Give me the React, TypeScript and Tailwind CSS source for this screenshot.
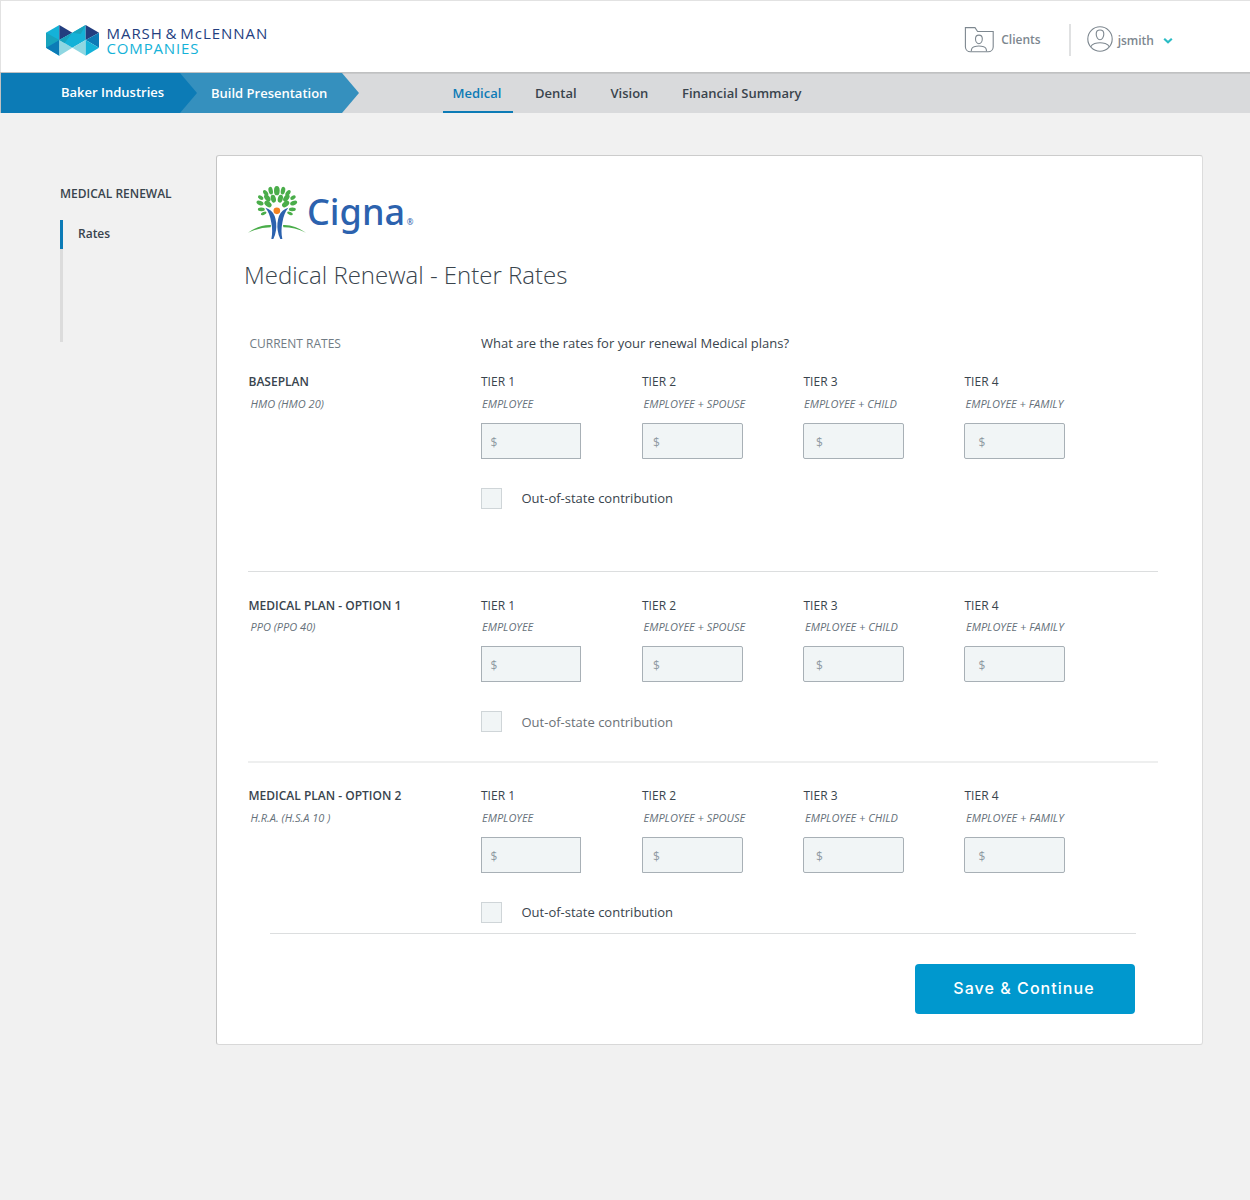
import React from "react";

function CompanyMark() {
  return (
    <svg width="53" height="31" viewBox="48 45 159 93" aria-hidden="true">
      <polygon points="48,68 88,45 88,137 48,113" fill="#14b2d8" />
      <polygon points="48,68 88,90 48,113" fill="#18a3bd" />
      <polygon points="48,113 88,90 88,137" fill="#0c7bb6" />
      <polygon points="88,45 127,68 88,90" fill="#233e7f" />
      <polygon points="88,90 127,113 88,137" fill="#8fd7e2" />
      <polygon points="127,68 167,45 167,90 127,113 88,90" fill="#14b2d8" />
      <polygon points="88,90 127,68 104,99" fill="#18a3bd" />
      <polygon points="127,68 167,45 152,72" fill="#18a3bd" />
      <polygon points="127,113 167,90 167,137" fill="#8fd7e2" />
      <polygon points="167,45 207,68 167,90" fill="#233e7f" />
      <polygon points="167,90 207,68 207,113" fill="#0c7bb6" />
      <polygon points="167,90 207,113 167,137" fill="#14b2d8" />
    </svg>
  );
}

const leaves: [number, number, number, number, number][] = [
  [80, 26, 6.5, 11.5, -12],
  [65, 33, 6, 10, -38],
  [88, 50, 7.5, 12, -14],
  [70, 48, 7.5, 12, -38],
  [50, 47, 5.5, 9, -58],
  [48, 63, 6.5, 11, -66],
  [72, 66, 8, 12, -52],
  [52, 82, 5.5, 10.5, -88],
  [59, 94, 4.5, 9, -112],
];

function CignaLogo() {
  return (
    <svg width="168" height="57" viewBox="12 6 504 171" role="img" aria-label="Cigna">
      <g fill="#4aad4a">
        <ellipse cx="98.5" cy="26" rx="8.5" ry="14" />
        {leaves.map(([x, y, rx, ry, a], i) => (
          <React.Fragment key={i}>
            <ellipse cx={x} cy={y} rx={rx} ry={ry} transform={`rotate(${a} ${x} ${y})`} />
            <ellipse cx={197 - x} cy={y} rx={rx} ry={ry} transform={`rotate(${-a} ${197 - x} ${y})`} />
          </React.Fragment>
        ))}
        <path d="M12 152 Q48 127 81 129 L80 136 Q46 136 12 152Z" />
        <path d="M186 152 Q150 127 117 129 L118 136 Q152 136 186 152Z" />
      </g>
      <g fill="#2c62ae">
        <path d="M64 77 Q84 82 92 102 Q99 122 96 145 Q94 160 88 171 L82 171 Q87 148 82 122 Q78 94 64 77Z" />
        <path d="M133 77 Q113 82 105 102 Q98 122 101 145 Q103 160 109 171 L115 171 Q110 148 115 122 Q119 94 133 77Z" />
        <text x="189" y="129" fontSize="108" fontWeight="540" fontFamily="'Noto Sans', sans-serif">
          Cigna
        </text>
        <text x="488" y="130" fontSize="24" fontFamily="'Noto Sans', sans-serif">
          ®
        </text>
      </g>
      <circle cx="98.5" cy="86.5" r="10" fill="#f58220" />
    </svg>
  );
}

function ClientsIcon() {
  return (
    <svg width="30" height="27" viewBox="-.6 -.4 30 27" fill="none" stroke="#7d878f" strokeWidth="1.1">
      <path d="M.8 1.2H10.4l2.6 3.9h15.6v15.4a5 5 0 0 1-5 4.8H5.8a5 5 0 0 1-5-4.8Z" />
      <path d="M14.3 8.700c2.300 0 3.400 1.500 3.400 3.700 0 2.600-1.500 4.900-3.400 4.900s-3.400-2.300-3.400-4.900c0-2.200 1.100-3.700 3.400-3.700Z" />
      <path d="M6.7 24.800c0-2.600.9-4 2.800-4.500 3-.8 6.600-.8 9.600 0 1.900.5 2.800 1.900 2.800 4.500" />
    </svg>
  );
}

function UserIcon() {
  return (
    <svg width="26" height="26" viewBox="0 0 26 26" fill="none" stroke="#7d878f" strokeWidth="1.1">
      <circle cx="13" cy="13" r="12.2" />
      <path d="M13 4c2.500 0 3.800 1.600 3.800 3.900 0 3-1.700 5.800-3.800 5.800s-3.800-2.800-3.800-5.800C9.200 5.600 10.500 4 13 4Z" />
      <path d="M3.700 20.900c.7-1.900 2-2.800 4-3.400 3.500-1 7.100-1 10.600 0 2 .6 3.300 1.500 4 3.400" />
    </svg>
  );
}

const tiers = [
  { name: "TIER 1", who: "EMPLOYEE", label: "", input: "w-[100px] pl-[8.5px]" },
  { name: "TIER 2", who: "EMPLOYEE + SPOUSE", label: "", input: "w-[101px] pl-[10px] rounded-r-[2px]" },
  { name: "TIER 3", who: "EMPLOYEE + CHILD", label: "pl-[0.5px]", input: "w-[101px] pl-[12px] rounded-[2px]" },
  { name: "TIER 4", who: "EMPLOYEE + FAMILY", label: "pl-[0.5px]", input: "w-[101px] pl-[13.5px] rounded-[2px]" },
];

type PlanProps = {
  name: string;
  detail: string;
  className: string;
  gap: string;
  shifts: string[];
  labelColor?: string;
};

function Plan({ name, detail, className, gap, shifts, labelColor = "leading-[21px] text-[#39444d]" }: PlanProps) {
  return (
    <section className={className}>
      <div className="grid grid-cols-[233px_repeat(4,161px)]">
        <div className={`flex flex-col pl-[0.5px] ${gap}`}>
          <h2 className="h-5 text-xs leading-[22px] font-semibold">{name}</h2>
          <p className="h-5 pl-[2px] text-[11px] leading-5 text-[#66717a] italic">{detail}</p>
        </div>
        {tiers.map((t, i) => (
          <div key={t.name}>
            <div className={`flex flex-col whitespace-nowrap ${gap}`}>
              <h3 className={`h-5 text-xs leading-[22px] ${t.label}`}>{t.name}</h3>
              <p className={`h-5 text-[11px] leading-5 text-[#66717a] italic ${shifts[i]}`}>{t.who}</p>
            </div>
            <div
              className={`mt-[9px] h-9 border border-[#a8b0b6] bg-[#f1f5f6] text-xs leading-[37px] text-[#8f9aa2] ${t.input}`}
            >
              $
            </div>
          </div>
        ))}
      </div>
      <label className={`mt-[29px] ml-[233px] flex h-[21px] text-[13px] ${labelColor}`}>
        <span className="mr-[19.5px] size-[21px] border border-[#cfd5d8] bg-[#f1f5f6]" />
        Out-of-state contribution
      </label>
    </section>
  );
}

export default function App() {
  return (
    <div className="min-h-[1200px] w-[1250px] bg-[#f1f1f1] font-['Open_Sans',sans-serif] text-[#39444d]">
      <header className="flex h-[72px] border-t border-l border-[#e2e2e2] bg-white">
        <div className="flex pt-6 pl-[45px]">
          <CompanyMark />
          <div className="ml-[7.5px] pt-px text-[15px] leading-[15px] whitespace-nowrap">
            <div className="tracking-[0.95px] text-[#233e7f] [word-spacing:-2px]">MARSH &amp; McLENNAN</div>
            <div className="tracking-[0.85px] text-[#14b2d8]">COMPANIES</div>
          </div>
        </div>
        <div className="mr-[77px] ml-auto flex text-xs leading-5 font-semibold text-[#7d878f]">
          <div className="mt-[25px]">
            <ClientsIcon />
          </div>
          <span className="mt-[29px] ml-[7px]">Clients</span>
          <div className="mt-[23px] ml-7 h-8 w-[2px] bg-[#e0e1e2]" />
          <div className="mt-[25px] ml-4">
            <UserIcon />
          </div>
          <span className="mt-[30px] ml-[5px]">jsmith</span>
          <svg className="mt-[36px] ml-[9px]" width="10" height="7" viewBox="0 0 10 7" fill="none">
            <path d="M1.200 1.800 5 5.200 8.800 1.800" stroke="#2abcc5" strokeWidth="2.2" />
          </svg>
        </div>
      </header>

      <nav className="flex h-[41px] border-t border-l border-[#c0c1c2] bg-[#d9dadc] text-[13px] font-semibold shadow-[inset_0_1px_0_#c8c9ca]">
        <div className="flex w-[442px] text-white">
          <div className="flex bg-[#3590be] [clip-path:polygon(0_0,341px_0,358px_50%,341px_100%,0_100%)]">
            <div className="w-[196px] bg-[#0c7bb6] pl-[60px] leading-[39px] [clip-path:polygon(0_0,179px_0,100%_50%,179px_100%,0_100%)]">
              Baker Industries
            </div>
            <div className="w-[162px] pl-[14px] leading-[41px] whitespace-nowrap">Build Presentation</div>
          </div>
        </div>
        <div className="h-10 w-[70px] border-b-2 border-[#0c7bb6] pl-[9.5px] leading-[41px] text-[#0c7bb6]">Medical</div>
        <div className="w-[76px] pl-[22px] leading-[41px]">Dental</div>
        <div className="w-[92px] pl-[21.5px] leading-[41px]">Vision</div>
        <div className="pl-px leading-[41px]">Financial Summary</div>
      </nav>

      <div className="flex">
        <aside className="w-[216px] pt-[71px] pl-[60px]">
          <h2 className="text-xs leading-5 font-semibold">MEDICAL RENEWAL</h2>
          <ul className="mt-[16px] h-[122px] w-[100px] text-xs leading-[27px] font-semibold shadow-[inset_3px_0_0_#dcdcdc]">
            <li className="h-[29px] border-l-[3px] border-[#0c7bb6] pl-[15px]">Rates</li>
          </ul>
        </aside>

        <main className="mt-[42px] h-[890px] w-[987px] rounded-[3px] border border-t-[#cccccc] border-r-[#dcdcdc] border-b-[#d8d8d8] border-l-[#c4c4c4] bg-white pt-7 pl-[31px]">
          <CignaLogo />
          <h1 className="-ml-1 mt-[18px] h-8 text-2xl leading-8 font-light">Medical Renewal - Enter Rates</h1>
          <div className="mt-[42px] flex h-5">
            <span className="w-[233px] pl-[1.5px] text-xs leading-[21px] text-[#717c84]">CURRENT RATES</span>
            <span className="text-[13px] leading-5">What are the rates for your renewal Medical plans?</span>
          </div>

          <Plan
            name="BASEPLAN"
            detail="HMO (HMO 20)"
            gap="gap-[3px]"
            shifts={["pl-px", "pl-[1.5px]", "pl-px", "pl-[1.5px]"]}
            className="h-[219px] w-[910px] border-b border-[#dcdedf] pt-[18px]"
          />
          <Plan
            name="MEDICAL PLAN - OPTION 1"
            detail="PPO (PPO 40)"
            gap="gap-[2px]"
            shifts={["pl-px", "pl-[1.5px]", "pl-[2px]", "pl-[2px]"]}
            labelColor="leading-[23px] text-[#6b7176]"
            className="h-[191px] w-[910px] border-b-2 border-[#eeefef] pt-[23px]"
          />
          <Plan
            name="MEDICAL PLAN - OPTION 2"
            detail="H.R.A. (H.S.A 10 )"
            gap="gap-[3px]"
            shifts={["pl-px", "pl-[1.5px]", "pl-[2px]", "pl-[2px]"]}
            className="pt-[22px]"
          />

          <div className="mt-[10px] ml-[22px] flex w-[866px] justify-end border-t border-[#dcdedf] pt-[30px] pr-px">
            <button className="h-[50px] w-[220px] rounded-[4px] bg-[#0098ce] pr-[2px] pb-[2px] font-['Inter',sans-serif] text-base leading-[48px] font-medium tracking-[1.05px] text-white">
              Save &amp; Continue
            </button>
          </div>
        </main>
      </div>
    </div>
  );
}
